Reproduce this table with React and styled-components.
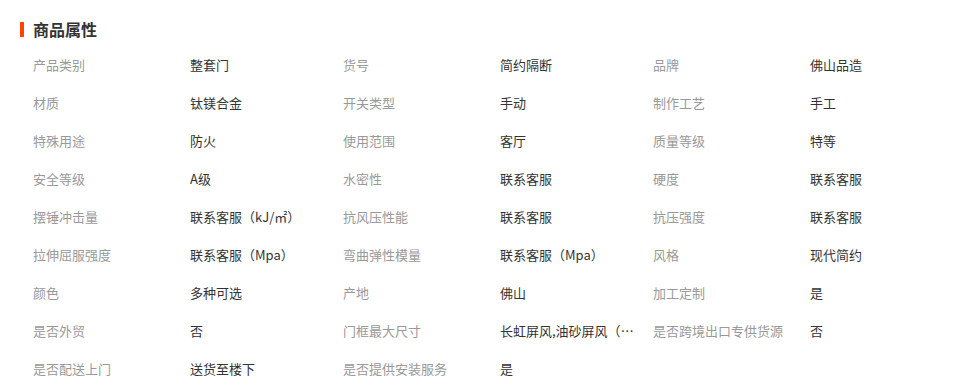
import React from 'react';
import styled, { createGlobalStyle } from 'styled-components';

const GlobalStyle = createGlobalStyle`
  body {
    margin: 0;
    background: #fff;
    font-family: "Noto Sans CJK SC", "Noto Sans", sans-serif;
  }
`;

const Section = styled.section`
  width: 955px;
  padding: 19px 0 0 20px;
  box-sizing: border-box;
`;

const Title = styled.h3`
  margin: 0;
  display: flex;
  align-items: center;
  gap: 9px;
  font-size: 16px;
  font-weight: bold;
  line-height: 20px;
  color: #333;

  &::before {
    content: '';
    width: 4px;
    height: 15px;
    background: #ff4400;
  }
`;

const Grid = styled.dl`
  margin: 7px 0 0 13px;
  display: grid;
  grid-template-columns: repeat(3, 157px 153px);
`;

const Label = styled.dt`
  font-size: 13px;
  line-height: 38px;
  color: #999;
  white-space: nowrap;
`;

const Value = styled.dd`
  margin: 0;
  padding-right: 12px;
  font-size: 13px;
  line-height: 38px;
  color: #333;
  white-space: nowrap;
  overflow: hidden;
  text-overflow: ellipsis;
`;

const attrs = [
  ['产品类别', '整套门'],
  ['货号', '简约隔断'],
  ['品牌', '佛山品造'],
  ['材质', '钛镁合金'],
  ['开关类型', '手动'],
  ['制作工艺', '手工'],
  ['特殊用途', '防火'],
  ['使用范围', '客厅'],
  ['质量等级', '特等'],
  ['安全等级', 'A级'],
  ['水密性', '联系客服'],
  ['硬度', '联系客服'],
  ['摆锤冲击量', '联系客服（kJ/㎡）'],
  ['抗风压性能', '联系客服'],
  ['抗压强度', '联系客服'],
  ['拉伸屈服强度', '联系客服（Mpa）'],
  ['弯曲弹性模量', '联系客服（Mpa）'],
  ['风格', '现代简约'],
  ['颜色', '多种可选'],
  ['产地', '佛山'],
  ['加工定制', '是'],
  ['是否外贸', '否'],
  ['门框最大尺寸', '长虹屏风,油砂屏风（长虹屏风2.4米）'],
  ['是否跨境出口专供货源', '否'],
  ['是否配送上门', '送货至楼下'],
  ['是否提供安装服务', '是'],
];

export default function App() {
  return (
    <>
      <GlobalStyle />
      <Section>
        <Title>商品属性</Title>
        <Grid>
          {attrs.map(([k, v]) => (
            <React.Fragment key={k}>
              <Label>{k}</Label>
              <Value title={v}>{v}</Value>
            </React.Fragment>
          ))}
        </Grid>
      </Section>
    </>
  );
}
